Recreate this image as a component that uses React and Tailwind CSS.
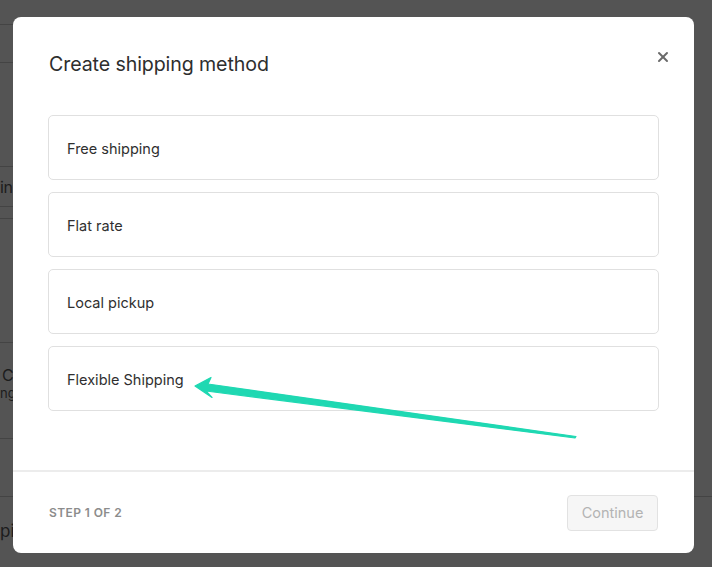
import React from 'react'
import { X } from 'lucide-react'

const methods = ['Free shipping', 'Flat rate', 'Local pickup', 'Flexible Shipping']

// the settings page that sits behind the dimmed overlay (only its left edge peeks out)
const BackPage = () => (
  <div className="flex flex-col text-[#1c1c1c]">
    <div className="h-[25px] w-[300px] border-b border-[#444]" />
    <div className="h-[38px] w-[300px] border-b border-[#444]" />
    <div className="h-[104px] w-[300px] border-b border-[#444]" />
    <div className="h-[40px] w-[300px] border-b border-[#444] flex items-center">
      <span className="text-[16px] leading-[20px] tracking-[-0.3px]">in</span>
    </div>
    <div className="h-[12px] w-[300px] border-b border-[#444]" />
    <div className="h-[124px] w-[300px] border-b border-[#444]" />
    <div className="h-[96px] w-[300px] border-b border-[#444] flex flex-col pt-[22px]">
      <span className="text-[16px] leading-[20px] pl-[2px]">C</span>
      <span className="text-[13px] leading-[16px]">ng</span>
    </div>
    <div className="h-[58px] border-b border-[#444]" />
    <div className="h-[70px] flex items-center pb-[2px]">
      <span className="text-[17px] leading-[20px]">pi</span>
    </div>
  </div>
)

const App = () => {
  return (
    <div className="relative w-[712px] h-[567px] overflow-hidden bg-[#545454]" style={{ fontFamily: 'Inter, "Noto Sans", sans-serif' }}>
      <BackPage />

      {/* Modal */}
      <div className="absolute left-[13px] top-[17px] w-[681px] h-[536px] bg-white rounded-[8px] flex flex-col">
        <div className="relative px-[36px] pt-[33px]">
          <h2 className="text-[19.6px] leading-[28px] text-[#2e2e2e] tracking-[-0.1px]">Create shipping method</h2>
          <button className="absolute right-[23px] top-[32px] text-[#6a6a6a]">
            <X size={16} strokeWidth={3} />
          </button>
        </div>

        <div className="flex flex-col gap-[12px] px-[35px] pt-[37px]">
          {methods.map((m) => (
            <div
              key={m}
              className="h-[65px] flex items-center pl-[18px] pt-[2px] border border-[#e0e0e0] rounded-[5px] text-[14.5px] text-[#2f2f2f]"
            >
              {m}
            </div>
          ))}
        </div>

        <div className="mt-auto h-[83px] border-t-2 border-[#ececec] flex items-center justify-between pl-[36px] pr-[36px]">
          <span className="text-[12px] font-semibold tracking-[0.4px] text-[#8c8c8c]">STEP 1 OF 2</span>
          <button className="w-[91px] h-[36px] rounded-[4px] border border-[#e2e2e2] bg-[#f6f6f6] text-[14.5px] text-[#b3b3b3]">
            Continue
          </button>
        </div>
      </div>

      {/* annotation arrow */}
      <svg className="absolute inset-0 pointer-events-none" width="712" height="567" viewBox="0 0 712 567">
        <polygon
          points="195,386 211,377.5 208,384 576,436.5 575,438 206,391 212,397.5"
          fill="#1fd8b2"
          stroke="#1fd8b2"
          strokeWidth="1.2"
          strokeLinejoin="round"
        />
      </svg>
    </div>
  )
}

export default App
